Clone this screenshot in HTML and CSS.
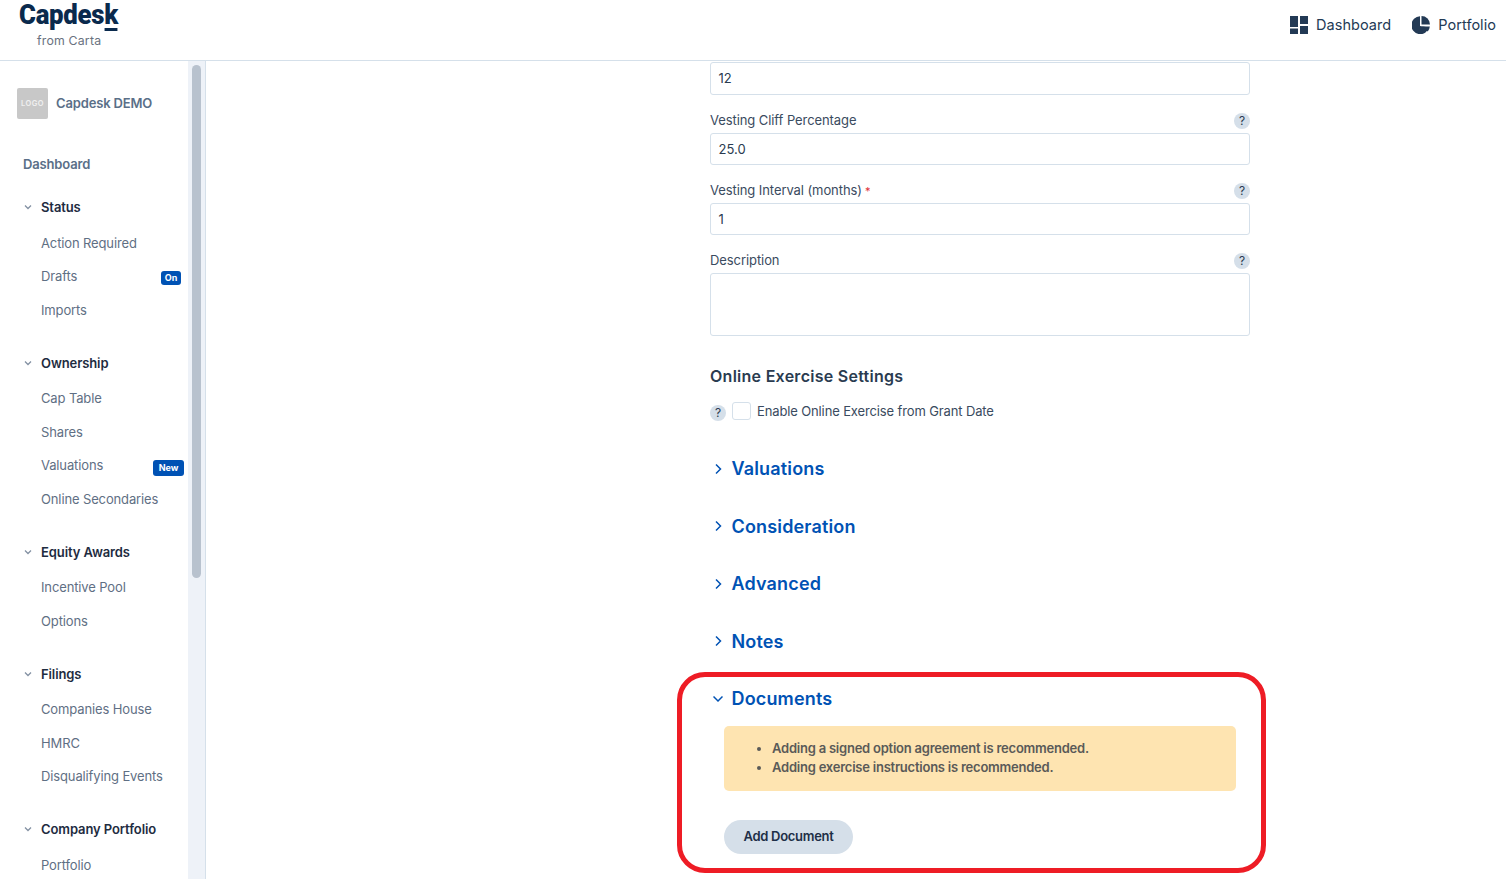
FILE: index.html
```html
<!DOCTYPE html>
<html lang="en">
<head>
<meta charset="utf-8">
<title>Capdesk</title>
<link rel="stylesheet" href="styles.css">
</head>
<body>
<header class="topbar">
  <div class="brand">
    <div class="brand-name"><span class="brand-word">Capdesk</span></div>
    <div class="brand-sub">from Carta</div>
  </div>
  <nav class="topnav">
    <a class="topnav-item">
      <svg class="topnav-icon" viewBox="0 0 18 18"><path fill="#233a55" d="M0 0h8v11H0zM10 0h8v8h-8zM0 12.500h8V18H0zM10 10h8v8h-8z"/></svg>
      <span class="topnav-text">Dashboard</span>
    </a>
    <a class="topnav-item">
      <svg class="topnav-icon" viewBox="0 0 18 18"><path fill="#233a55" d="M8 .2A9 9 0 1 0 17 11.500l-9-1.500z"/><path fill="#233a55" d="M9.500 0A8.500 8.500 0 0 1 18 8.500H9.500z"/><path fill="#233a55" d="M10 10.500l7.800 0a9 9 0 0 1-2 5z"/></svg>
      <span class="topnav-text">Portfolio</span>
    </a>
  </nav>
</header>
<div class="shell">
  <aside class="sidebar">
    <div class="side-content">
      <div class="company">
        <div class="company-logo">LOGO</div>
        <span class="company-name">Capdesk DEMO</span>
      </div>
      <div class="side-dash">Dashboard</div>

      <section class="group">
        <div class="group-head"><svg class="group-chev" viewBox="0 0 8 6"><path d="M1 1.500l3 3 3-3"/></svg>Status</div>
        <div class="item">Action Required</div>
        <div class="item">Drafts<span class="badge badge-on">On</span></div>
        <div class="item">Imports</div>
      </section>
      <section class="group">
        <div class="group-head"><svg class="group-chev" viewBox="0 0 8 6"><path d="M1 1.500l3 3 3-3"/></svg>Ownership</div>
        <div class="item">Cap Table</div>
        <div class="item">Shares</div>
        <div class="item">Valuations<span class="badge badge-new">New</span></div>
        <div class="item">Online Secondaries</div>
      </section>
      <section class="group">
        <div class="group-head"><svg class="group-chev" viewBox="0 0 8 6"><path d="M1 1.500l3 3 3-3"/></svg>Equity Awards</div>
        <div class="item">Incentive Pool</div>
        <div class="item">Options</div>
      </section>
      <section class="group">
        <div class="group-head"><svg class="group-chev" viewBox="0 0 8 6"><path d="M1 1.500l3 3 3-3"/></svg>Filings</div>
        <div class="item">Companies House</div>
        <div class="item">HMRC</div>
        <div class="item">Disqualifying Events</div>
      </section>
      <section class="group">
        <div class="group-head"><svg class="group-chev" viewBox="0 0 8 6"><path d="M1 1.500l3 3 3-3"/></svg>Company Portfolio</div>
        <div class="item">Portfolio</div>
      </section>
    </div>
    <div class="scrolltrack"><div class="scrollthumb"></div></div>
  </aside>

  <main class="main">
    <div class="form">
      <div class="input">12</div>

      <div class="label-row"><span class="label-text">Vesting Cliff Percentage</span><span class="help">?</span></div>
      <div class="input">25.0</div>

      <div class="label-row"><span class="label-text">Vesting Interval (months)<span class="req"> *</span></span><span class="help">?</span></div>
      <div class="input">1</div>

      <div class="label-row"><span class="label-text">Description</span><span class="help">?</span></div>
      <div class="textarea"></div>

      <h3 class="subhead">Online Exercise Settings</h3>
      <div class="check-row">
        <span class="help">?</span>
        <span class="checkbox"></span>
        <span>Enable Online Exercise from Grant Date</span>
      </div>

      <div class="section"><svg class="sec-chev" viewBox="0 0 10 12"><path d="M3 1.500L7.500 6 3 10.500"/></svg>Valuations</div>
      <div class="section"><svg class="sec-chev" viewBox="0 0 10 12"><path d="M3 1.500L7.500 6 3 10.500"/></svg>Consideration</div>
      <div class="section"><svg class="sec-chev" viewBox="0 0 10 12"><path d="M3 1.500L7.500 6 3 10.500"/></svg>Advanced</div>
      <div class="section"><svg class="sec-chev" viewBox="0 0 10 12"><path d="M3 1.500L7.500 6 3 10.500"/></svg>Notes</div>
      <div class="section"><svg class="sec-chev" viewBox="0 0 10 12"><path d="M.5 3.500L5 8l4.500-4.500"/></svg>Documents</div>

      <div class="doc-body">
        <div class="alert">
          <ul class="alert-list">
            <li>Adding a signed option agreement is recommended.</li>
            <li>Adding exercise instructions is recommended.</li>
          </ul>
        </div>
        <button class="add-btn">Add Document</button>
      </div>
    </div>
    <div class="highlight"></div>
  </main>
</div>
</body>
</html>
```
FILE: styles.css
```css
* { box-sizing: border-box; }
html, body { margin: 0; height: 100%; overflow: hidden; }
body { font-family: Inter, "Liberation Sans", sans-serif; font-size: 13px; color: #2a3b50; background: #fff; }

.topbar { height: 61px; border-bottom: 1px solid #d5e0ea; display: flex; justify-content: space-between; align-items: flex-start; }
.brand { width: 137px; padding-left: 19px; }
.brand-name { height: 33px; }
.brand-word { display: inline-block; position: relative; top: -1px; font-family: Roboto, sans-serif; font-weight: 900; font-size: 28px; line-height: 32px; color: #0a2a4d; transform: scaleX(0.92); transform-origin: 0 0; letter-spacing: -0.3px; }
.brand-word::after { content: ""; position: absolute; right: 1px; top: 28.500px; width: 13.500px; height: 3px; background: #0a2a4d; }
.brand-sub { margin-left: 18px; font-size: 12.300px; line-height: 16px; color: #6a7280; letter-spacing: 0.2px; }
.topnav { display: flex; gap: 21px; padding: 16px 10px 0 0; }
.topnav-item { display: flex; align-items: center; gap: 8px; height: 18px; font-size: 14.500px; color: #233a55; letter-spacing: 0.05px; }
.topnav-text { padding-bottom: 2px; }
.topnav-icon { width: 18px; height: 18px; }

.shell { display: flex; height: 818px; }
.sidebar { width: 206px; flex: none; display: flex; border-right: 1px solid #d5e0ea; overflow: hidden; }
.side-content { width: 188px; flex: none; padding-top: 27px; }
.company { display: flex; align-items: center; gap: 8px; padding-left: 17px; height: 31px; }
.company-logo { width: 31px; height: 31px; border-radius: 2px; background: #c8c8c8; color: #f0f0f0; font-size: 7.500px; font-weight: 600; letter-spacing: 0.5px; display: flex; align-items: center; justify-content: center; }
.company-name { font-size: 13px; font-weight: 600; color: #5a6f88; letter-spacing: -0.15px; padding-bottom: 2px; }
.side-dash { margin-top: 30px; padding-left: 23px; height: 31px; line-height: 31px; font-weight: 600; font-size: 13px; color: #5a6f88; letter-spacing: -0.15px; }
.side-dash + .group { margin-top: 10px; }
.group { padding-bottom: 18.500px; }
.group-head { display: flex; align-items: center; height: 34px; padding-left: 24px; font-weight: 600; color: #1e2c3f; font-size: 13px; letter-spacing: -0.1px; }
.group-chev { width: 8px; height: 6px; margin-right: 9px; fill: none; stroke: #8391a3; stroke-width: 1.300; }
.group-head + .item { margin-top: 2.500px; }
.item { position: relative; height: 33.500px; line-height: 33.900px; padding-left: 41px; color: #5f6f84; font-size: 13px; letter-spacing: -0.13px; }
.badge { position: absolute; top: 11px; height: 14px; border-radius: 3px; background: #0052b4; color: #fff; font-size: 9px; font-weight: 700; line-height: 14px; text-align: center; letter-spacing: 0; }
.badge-on { left: 161px; width: 20px; }
.badge-new { left: 153px; width: 31px; height: 16px; line-height: 16px; }
.scrolltrack { width: 17px; flex: none; background: #eef2f8; padding: 4px 4px 0; }
.scrollthumb { width: 9px; height: 513px; border-radius: 5px; background: #b8c2ce; }

.main { position: relative; flex: 1; overflow: hidden; padding-left: 504px; padding-top: 1.400px; }
.form { width: 540px; }
.input, .textarea { border: 1px solid #d5e0ea; border-radius: 3px; width: 100%; background: #fff; }
.input { height: 32.500px; line-height: 30px; padding: 0 7.500px; font-size: 13px; color: #2a3b50; }
.label-row { display: flex; justify-content: space-between; align-items: center; height: 16px; margin: 17.800px 0 4px; font-size: 13px; color: #3a4b60; letter-spacing: -0.08px; }
.label-text { padding-bottom: 2px; }
.req { color: #e0303a; font-size: 11px; }
.help { width: 16px; height: 16px; border-radius: 50%; background: #d5dfe9; color: #2a3b50; font-size: 12px; line-height: 16px; text-align: center; flex: none; letter-spacing: 0; }
.textarea { height: 63px; }
.subhead { margin: 29.600px 0 0; font-size: 16px; line-height: 20px; font-weight: 600; color: #2a3b50; letter-spacing: 0.27px; }
.check-row { display: flex; align-items: center; height: 18px; margin-top: 16px; color: #3a4b60; font-size: 13px; letter-spacing: -0.13px; }
.check-row .help { margin-top: 4px; }
.checkbox { width: 19px; height: 18px; border: 1px solid #d5e0ea; border-radius: 3px; margin: 0 6px 0 6px; }
.section { display: flex; align-items: center; height: 24px; margin-top: 33.500px; padding-left: 3px; font-size: 18px; font-weight: 600; color: #0052b4; letter-spacing: 0.16px; }
.check-row + .section { margin-top: 37px; }
.sec-chev { width: 10px; height: 12px; margin-right: 8.500px; fill: none; stroke: #0052b4; stroke-width: 1.500; }
.doc-body { padding: 15px 14px 0; }
.alert { height: 65px; border-radius: 5px; background: #fee4b1; padding-top: 13px; }
.alert-list { margin: 0; padding-left: 48px; font-size: 13px; line-height: 19px; font-weight: 600; color: #5a5a58; letter-spacing: -0.23px; }
.add-btn { display: block; margin-top: 29px; width: 129px; height: 34px; border: 0; border-radius: 17px; background: #d5dfe9; color: #1e2f47; font-family: inherit; font-size: 13px; font-weight: 600; letter-spacing: -0.3px; padding: 0 0 1px; }
.highlight { position: absolute; left: 470.700px; top: 611px; width: 589.300px; height: 201px; border: 5px solid #ee1c25; border-radius: 28px; pointer-events: none; }
```
